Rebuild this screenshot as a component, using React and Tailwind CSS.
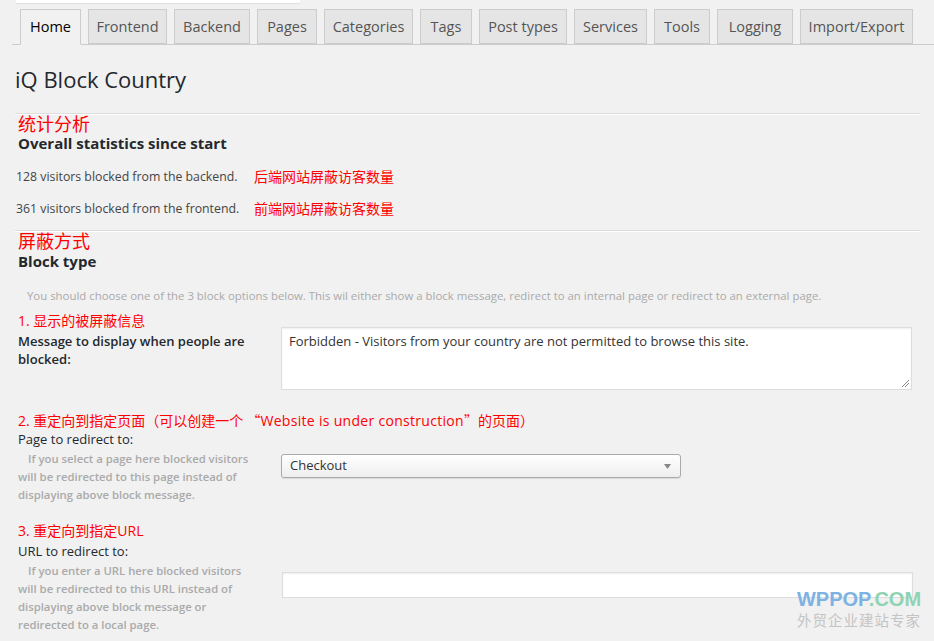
import React from "react";

const tabs = [
  ["Home", "w-[61px]"],
  ["Frontend", "w-[79px]"],
  ["Backend", "w-[76px]"],
  ["Pages", "w-[60px]"],
  ["Categories", "w-[89px]"],
  ["Tags", "w-[52px]"],
  ["Post types", "w-[88px]"],
  ["Services", "w-[73px]"],
  ["Tools", "w-[56px]"],
  ["Logging", "w-[76px]"],
  ["Import/Export", "w-[113px]"],
];

const cjk = "font-['Noto_Sans_CJK_SC',sans-serif]";

export default function App() {
  return (
    <div className="relative min-h-[641px] h-[641px] overflow-hidden bg-[#f1f1f1] font-['Open_Sans','Noto_Sans_CJK_SC',sans-serif] text-[#444]">
      <div className="ml-[16px] h-[3px] w-[284px] bg-white shadow-[0_1px_1px_rgba(0,0,0,0.08)]" />
      {/* tabs */}
      <div className="ml-[12px] mt-[6px] flex gap-[7px] border-b border-[#ccc] pl-[8px]">
        {tabs.map(([t, w], i) => (
          <div
            key={t}
            className={
              (i === 0
                ? "h-[36px] border-b-[#f1f1f1] bg-[#f1f1f1] text-black "
                : "h-[35px] bg-[#e5e5e5] text-[#555] ") +
              w +
              " -mb-px whitespace-nowrap border border-[#ccc] text-center text-[14.5px] leading-[34px]"
            }
          >
            {t}
          </div>
        ))}
      </div>

      <div className="pl-[15px] pr-[14px]">
        <h1 className="mt-[19px] text-[22px] leading-[30px] font-normal text-[#23282d]">iQ Block Country</h1>
        <div className="mt-[19px] border-t border-[#ddd] border-b border-b-white" />
        <div className="pl-[3px] text-[18px] leading-[19px] text-[#ff0000]">统计分析</div>
        <div className="pl-[3px] text-[15px] leading-[18px] font-bold text-[#23282d]">Overall statistics since start</div>
        <div className="mt-[9px] flex items-center text-[12.3px] leading-[32px]">
          <span className="w-[239px] pl-[1px]">128 visitors blocked from the backend.</span>
          <span className="text-[14px] text-[#ff0000]">后端网站屏蔽访客数量</span>
        </div>
        <div className="flex items-center text-[12.3px] leading-[32px]">
          <span className="w-[239px] pl-[1px]">361 visitors blocked from the frontend.</span>
          <span className="text-[14px] text-[#ff0000]">前端网站屏蔽访客数量</span>
        </div>
        <div className="mt-[5px] border-t border-[#ddd] border-b border-b-white" />
        <div className="pl-[3px] text-[18px] leading-[19px] text-[#ff0000]">屏蔽方式</div>
        <div className="pl-[3px] text-[15px] leading-[20px] font-bold text-[#23282d]">Block type</div>
        <p className="mt-[16px] pl-[12px] text-[11.4px] leading-[18px] text-[#aaa]">
          You should choose one of the 3 block options below. This wil either show a block message, redirect to an internal page or redirect to an external page.
        </p>

        {/* 1 */}
        <div className="mt-[7px] pl-[3px] text-[14px] leading-[18px] text-[#ff0000]">1. 显示的被屏蔽信息</div>
        <div className="flex items-start">
          <div className="w-[266px] pl-[3px] pt-[2px] text-[13px] leading-[18px] font-semibold text-[#23282d]">
            Message to display when people are blocked:
          </div>
          <div className="relative -mt-[3px] h-[63px] w-[631px] border border-[#ddd] bg-white px-[7px] pt-[3px] text-[13px] leading-[20px] text-[#333] shadow-[inset_0_1px_2px_rgba(0,0,0,0.07)]">
            Forbidden - Visitors from your country are not permitted to browse this site.
            <svg className="absolute right-[1px] bottom-[1px]" width="10" height="10" viewBox="0 0 10 10">
              <line x1="9" y1="2" x2="2" y2="9" stroke="#888" strokeWidth="1" />
              <line x1="9" y1="5" x2="5" y2="9" stroke="#888" strokeWidth="1" />
            </svg>
          </div>
        </div>

        {/* 2 */}
        <div className="mt-[21px] whitespace-nowrap pl-[3px] text-[14px] leading-[18px] text-[#ff0000]">
          2. 重定向到指定页面<span className={cjk}>（</span>可以创建一个<span className={cjk}> “</span><span className="tracking-[0.3px]">Website is under construction</span><span className={cjk}>”</span>的页面<span className={cjk}>）</span>
        </div>
        <div className="flex items-start">
          <div className="w-[266px] pl-[3px]">
            <div className="text-[13px] leading-[18px] text-[#23282d]">Page to redirect to:</div>
            <p className="mt-[2px] whitespace-nowrap text-[11.3px] leading-[18px] font-semibold text-[#aaa]">
              <span className="pl-[10px]">If you select a page here blocked visitors</span>
              <br />will be redirected to this page instead of
              <br />displaying above block message.
            </p>
          </div>
          <div className="mt-[24px] flex h-[24px] w-[400px] items-center justify-between rounded-[3px] border border-[#aaa] bg-gradient-to-b from-white to-[#eee] pl-[8px] pr-[9px] text-[13px] text-[#333] shadow-[0_1px_1px_rgba(0,0,0,0.1)]">
            <span>Checkout</span>
            <svg width="7" height="5" viewBox="0 0 7 5"><path d="M0 0 L7 0 L3.5 5 Z" fill="#888" /></svg>
          </div>
        </div>

        {/* 3 */}
        <div className="mt-[18px] pl-[3px] text-[14px] leading-[18px] text-[#ff0000]">3. 重定向到指定URL</div>
        <div className="flex items-start">
          <div className="w-[266px] pl-[3px]">
            <div className="mt-[2px] text-[13px] leading-[18px] text-[#23282d]">URL to redirect to:</div>
            <p className="mt-[2px] whitespace-nowrap text-[11.3px] leading-[18px] font-semibold text-[#aaa]">
              <span className="pl-[10px]">If you enter a URL here blocked visitors</span>
              <br />will be redirected to this URL instead of
              <br />displaying above block message or
              <br />redirected to a local page.
            </p>
          </div>
          <div className="mt-[32px] ml-[1px] h-[26px] w-[631px] border border-[#ddd] bg-white shadow-[inset_0_1px_2px_rgba(0,0,0,0.07)]" />
        </div>
      </div>

      {/* watermark */}
      <div className="absolute left-[796px] top-[589px] w-[126px] text-center">
        <div className="font-['Liberation_Sans',sans-serif] text-[20px] leading-[20px] font-bold">
          <span className="text-[#7eb2e3]">WPPOP</span><span className="text-[#8fd3b3]">.COM</span>
        </div>
        <div className="mt-[3px] text-[14.5px] leading-[18px] tracking-[1px] text-[#c4c4c4]">外贸企业建站专家</div>
      </div>
    </div>
  );
}
